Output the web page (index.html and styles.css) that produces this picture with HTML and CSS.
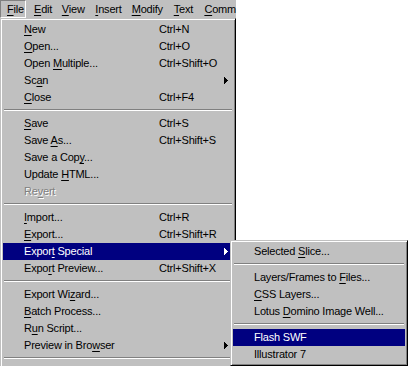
FILE: index.html
```html
<!DOCTYPE html>
<html>
<head>
<meta charset="utf-8">
<link rel="stylesheet" href="styles.css">
</head>
<body>
<div class="screen">
  <div class="menubar">
    <div class="mb-item pressed w-file"><u>F</u>ile</div>
    <div class="mb-item w-edit"><u>E</u>dit</div>
    <div class="mb-item w-view"><u>V</u>iew</div>
    <div class="mb-item w-insert"><u>I</u>nsert</div>
    <div class="mb-item w-modify"><u>M</u>odify</div>
    <div class="mb-item w-text"><u>T</u>ext</div>
    <div class="mb-item w-cmd"><u>C</u>omm</div>
  </div>

  <div class="menu main">
    <div class="item"><span class="label"><u>N</u>ew</span><span class="key">Ctrl+N</span></div>
    <div class="item"><span class="label"><u>O</u>pen...</span><span class="key">Ctrl+O</span></div>
    <div class="item"><span class="label">Open <u>M</u>ultiple...</span><span class="key">Ctrl+Shift+O</span></div>
    <div class="item"><span class="label">Sc<u>a</u>n</span><span class="key"></span><svg class="arrow" width="4" height="7" viewBox="0 0 4 7"><path d="M0 0h1v7h-1z M1 1h1v5h-1z M2 2h1v3h-1z M3 3h1v1h-1z"/></svg></div>
    <div class="item"><span class="label"><u>C</u>lose</span><span class="key">Ctrl+F4</span></div>
    <div class="sep"></div>
    <div class="item"><span class="label"><u>S</u>ave</span><span class="key">Ctrl+S</span></div>
    <div class="item"><span class="label">Save <u>A</u>s...</span><span class="key">Ctrl+Shift+S</span></div>
    <div class="item"><span class="label">Save a Cop<u>y</u>...</span><span class="key"></span></div>
    <div class="item"><span class="label">Update <u>H</u>TML...</span><span class="key"></span></div>
    <div class="item disabled"><span class="label">Re<u>v</u>ert</span><span class="key"></span></div>
    <div class="sep"></div>
    <div class="item"><span class="label"><u>I</u>mport...</span><span class="key">Ctrl+R</span></div>
    <div class="item"><span class="label"><u>E</u>xport...</span><span class="key">Ctrl+Shift+R</span></div>
    <div class="item active"><span class="label">Expor<u>t</u> Special</span><span class="key"></span><svg class="arrow" width="4" height="7" viewBox="0 0 4 7"><path d="M0 0h1v7h-1z M1 1h1v5h-1z M2 2h1v3h-1z M3 3h1v1h-1z"/></svg></div>
    <div class="item"><span class="label">Expo<u>r</u>t Preview...</span><span class="key">Ctrl+Shift+X</span></div>
    <div class="sep"></div>
    <div class="item"><span class="label">Export Wi<u>z</u>ard...</span><span class="key"></span></div>
    <div class="item"><span class="label"><u>B</u>atch Process...</span><span class="key"></span></div>
    <div class="item"><span class="label">R<u>u</u>n Script...</span><span class="key"></span></div>
    <div class="item"><span class="label">Preview in Bro<u>w</u>ser</span><span class="key"></span><svg class="arrow" width="4" height="7" viewBox="0 0 4 7"><path d="M0 0h1v7h-1z M1 1h1v5h-1z M2 2h1v3h-1z M3 3h1v1h-1z"/></svg></div>
    <div class="sep"></div>
    <div class="item"></div>
  </div>

  <div class="menu sub">
    <div class="item"><span class="label">Selected <u>S</u>lice...</span></div>
    <div class="sep"></div>
    <div class="item"><span class="label">Layers/Frames to <u>F</u>iles...</span></div>
    <div class="item"><span class="label"><u>C</u>SS Layers...</span></div>
    <div class="item"><span class="label">Lotus <u>D</u>omino Image Well...</span></div>
    <div class="sep"></div>
    <div class="item active"><span class="label">Flash SWF</span></div>
    <div class="item"><span class="label">Illustrator 7</span></div>
  </div>
</div>
</body>
</html>
```

FILE: styles.css
```css
html, body {
  margin: 0;
  padding: 0;
  background: #ffffff;
}

.screen {
  position: relative;
  width: 408px;
  height: 366px;
  overflow: hidden;
  background: #ffffff;
  font-family: "Liberation Sans", Arial, sans-serif;
  font-size: 11px;
  letter-spacing: -0.2px;
  color: #000000;
}

u {
  text-decoration: underline;
  text-decoration-thickness: 1px;
  text-underline-offset: 2px;
}

/* ---- menu bar ---- */
.menubar {
  display: flex;
  width: 236px;
  height: 18px;
  background: #c0c0c0;
}

.mb-item {
  box-sizing: border-box;
  height: 18px;
  line-height: 18px;
  padding-left: 7px;
  white-space: nowrap;
}

.mb-item.pressed {
  border: 1px solid;
  border-color: #808080 #ffffff #ffffff #808080;
  line-height: 16px;
  padding-left: 6px;
}

.w-file { width: 27px; margin-right: 1px; }
.w-edit { width: 29px; }
.w-view { width: 35px; }
.w-insert { width: 38px; }
.w-modify { width: 44px; }
.w-text { width: 32px; }
.w-cmd { flex: 1; }

/* ---- popup menus ---- */
.menu {
  position: absolute;
  box-sizing: border-box;
  background: #c0c0c0;
  border: 1px solid;
  border-color: #c0c0c0 #000000 #000000 #c0c0c0;
  box-shadow: inset 1px 1px 0 #ffffff, inset -1px -1px 0 #808080;
  padding: 2px;
}

.menu.main {
  left: 0;
  top: 18px;
  width: 236px;
  height: 380px;
}

.menu.sub {
  left: 230px;
  top: 240px;
  width: 178px;
  height: 126px;
}

.item {
  display: flex;
  align-items: center;
  height: 17px;
  line-height: 17px;
  padding-left: 21px;
  white-space: nowrap;
}

.item .label {
  flex: 0 0 135px;
}

.menu.sub .item .label {
  flex: 1;
}

.item .key {
  flex: 1;
}

.item .arrow {
  flex: 0 0 4px;
  margin-right: 5px;
  fill: #000000;
}

.item.active {
  background: #000080;
  color: #ffffff;
}

.item.active .arrow {
  fill: #ffffff;
}

.item.disabled {
  color: #808080;
  text-shadow: 1px 1px 0 #ffffff;
}

.sep {
  height: 1px;
  margin: 3px 1px 4px 1px;
  background: #808080;
  border-bottom: 1px solid #ffffff;
}
```
